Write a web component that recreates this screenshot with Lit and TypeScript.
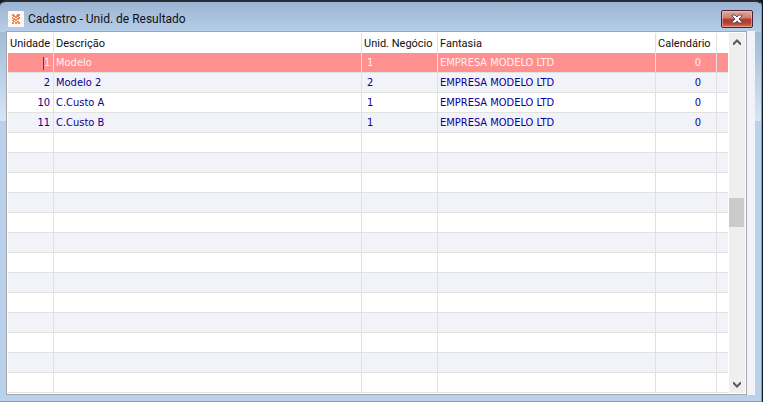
import { LitElement, html, css, nothing } from "lit";
import { customElement, property } from "lit/decorators.js";

interface Unit {
  id: string;
  name: string;
  business: string;
  company: string;
  calendar: string;
}

const UNITS: Unit[] = [
  { id: "1", name: "Modelo", business: "1", company: "EMPRESA MODELO LTD", calendar: "0" },
  { id: "2", name: "Modelo 2", business: "2", company: "EMPRESA MODELO LTD", calendar: "0" },
  { id: "10", name: "C.Custo A", business: "1", company: "EMPRESA MODELO LTD", calendar: "0" },
  { id: "11", name: "C.Custo B", business: "1", company: "EMPRESA MODELO LTD", calendar: "0" },
];

const EMPTY_ROWS = 13;

@customElement("title-bar")
export class TitleBar extends LitElement {
  @property() heading = "";

  static styles = css`
    :host {
      display: flex;
      align-items: center;
      box-sizing: border-box;
      height: 29px;
      padding: 4px 2px 0;
      font: 12px/16px Roboto, "Noto Sans", sans-serif;
      color: #101018;
    }
    .logo {
      width: 16px;
      height: 16px;
      margin-right: 4px;
      flex: none;
    }
    .title {
      flex: 1;
      margin: 0;
      font: inherit;
      white-space: nowrap;
    }
    .close {
      display: flex;
      align-items: center;
      justify-content: center;
      box-sizing: border-box;
      width: 32px;
      height: 18px;
      padding: 0;
      border: 1px solid #4a2430;
      border-radius: 2px;
      background: linear-gradient(#e0aaa2 0%, #cd7a70 45%, #b43a30 50%, #b8402f 75%, #d2705c 100%);
      box-shadow: inset 0 0 0 1px rgba(255, 215, 205, 0.45);
    }
  `;

  render() {
    return html`
      <svg class="logo" viewBox="0 0 16 16" aria-hidden="true">
        <rect width="16" height="16" rx="1" fill="#fdf8f6" />
        <g fill="#f58a50">
          <path d="M4 3h2v1h1v1h1V4h1V3h3v2h-1v1h-2v1H7V6H5V5H4z" />
          <path d="M4 6h1v1h2v1h2V7h1V6h2v2h-1v1H9v1H7V9H6v1H4V9h1V8H4z" />
          <path d="M4 11h1v-1h2v1H6v2H4zM7 11h2v-1h2v1h1v2h-2v-1H9v1H7z" />
        </g>
      </svg>
      <h1 class="title">${this.heading}</h1>
      <button class="close" aria-label="Fechar">
        <svg width="12" height="10" viewBox="0 0 12 10" aria-hidden="true">
          <path d="M1 1h3l2 2 2-2h3v1L8 5l3 3v1H8L6 7 4 9H1V8l3-3-3-3z" fill="#f8f8f8" stroke="#58505c" />
        </svg>
      </button>
    `;
  }
}

@customElement("scroll-rail")
export class ScrollRail extends LitElement {
  static styles = css`
    :host {
      display: flex;
      flex-direction: column;
      width: 16px;
      background: #efefef;
    }
    .arrow {
      display: flex;
      align-items: center;
      justify-content: center;
      height: 17px;
      padding: 0;
      border: 0;
      background: transparent;
    }
    .track {
      flex: 1;
      display: flex;
      flex-direction: column;
    }
    .before {
      flex: 148;
    }
    .thumb {
      width: 15px;
      height: 29px;
      background: #cbcbcb;
    }
    .after {
      flex: 149;
    }
  `;

  render() {
    return html`
      <button class="arrow" aria-label="Acima">
        <svg width="8" height="6" viewBox="0 0 8 6"><path d="M0 5V4l4-4 4 4v2H7L4 3 1 6H0z" fill="#5a5a5a" /></svg>
      </button>
      <div class="track">
        <div class="before"></div>
        <div class="thumb"></div>
        <div class="after"></div>
      </div>
      <button class="arrow" aria-label="Abaixo">
        <svg width="8" height="6" viewBox="0 0 8 6"><path d="M0 1v1l4 4 4-4V0H7L4 3 1 0H0z" fill="#5a5a5a" /></svg>
      </button>
    `;
  }
}

@customElement("unit-table")
export class UnitTable extends LitElement {
  static styles = css`
    :host {
      display: block;
      font: 11px/16px "DejaVu Sans Condensed", "Noto Sans", sans-serif;
    }
    table {
      width: 100%;
      table-layout: fixed;
      border-spacing: 0;
    }
    .c-id { width: 46px; }
    .c-business { width: 76px; }
    .c-company { width: 218px; }
    .c-calendar { width: 61px; }
    .c-end { width: 11px; }
    th, td {
      box-sizing: border-box;
      height: 20px;
      padding: 1px 2px 0;
      border-right: 1px solid #e1e1e1;
      text-align: left;
      font-weight: normal;
      white-space: nowrap;
      overflow: hidden;
    }
    th {
      font: 11px/16px Roboto, "Noto Sans", sans-serif;
      color: #101010;
    }
    th:last-child, td:last-child { border-right: 0; }
    td {
      border-bottom: 1px solid #e1e1e1;
      color: #0a0096;
    }
    tr:nth-child(even) td { background: #f2f3f9; }
    .selected td {
      background: #ff9090;
      color: #fff0f0;
    }
    td.id { text-align: right; padding-right: 3px; }
    td.business { padding-left: 5px; }
    td.calendar { text-align: right; padding-right: 15px; }
    .editor {
      display: flex;
      justify-content: flex-end;
      align-items: center;
    }
    .caret {
      width: 1px;
      height: 13px;
      background: #00686c;
    }
    .field {
      width: 6px;
      height: 16px;
      padding: 0;
      border: 0;
      outline: 0;
      background: transparent;
      font: inherit;
      color: inherit;
      text-align: right;
    }
  `;

  private row(unit: Unit, index: number) {
    const selected = index === 0;
    return html`
      <tr class=${selected ? "selected" : nothing}>
        <td class="id">
          ${selected
            ? html`<div class="editor">
                <span class="caret"></span><input class="field" aria-label="Unidade" .value=${unit.id} />
              </div>`
            : unit.id}
        </td>
        <td>${unit.name}</td>
        <td class="business">${unit.business}</td>
        <td>${unit.company}</td>
        <td class="calendar">${unit.calendar}</td>
        <td></td>
      </tr>
    `;
  }

  render() {
    return html`
      <table>
        <colgroup>
          <col class="c-id" /><col /><col class="c-business" />
          <col class="c-company" /><col class="c-calendar" /><col class="c-end" />
        </colgroup>
        <thead>
          <tr>
            <th scope="col">Unidade</th>
            <th scope="col">Descrição</th>
            <th scope="col">Unid. Negócio</th>
            <th scope="col">Fantasia</th>
            <th scope="col">Calendário</th>
            <th></th>
          </tr>
        </thead>
        <tbody>
          ${UNITS.map((unit, index) => this.row(unit, index))}
          ${Array.from(
            { length: EMPTY_ROWS },
            () => html`<tr><td></td><td></td><td></td><td></td><td></td><td></td></tr>`
          )}
        </tbody>
      </table>
    `;
  }
}

@customElement("app-root")
export class AppRoot extends LitElement {
  static styles = css`
    :host {
      display: block;
      background: #101820;
      padding-right: 1px;
    }
    .window {
      display: flex;
      flex-direction: column;
      box-sizing: border-box;
      min-height: 100vh;
      padding: 0 6px 6px;
      border-top: 2px solid #2c2c34;
      border-right: 1px solid #2fc0dc;
      border-bottom: 1px solid #2fc0dc;
      border-radius: 6px 6px 0 0;
      background: linear-gradient(#9ab3d1 0, #b7cfea 30px, transparent 30px),
        linear-gradient(#a2bad7 30px, #d6e6f6 119px, #b9d1ea 119px);
    }
    .client {
      display: flex;
      flex: 1;
      padding-right: 8px;
      background: #f2f3f9;
    }
    .grid {
      display: flex;
      flex: 1;
      gap: 1px;
      padding: 1px;
      border: 1px solid #a3a5ab;
      background: #fff;
    }
    unit-table { flex: 1; }
  `;

  render() {
    return html`
      <main class="window">
        <title-bar heading="Cadastro - Unid. de Resultado"></title-bar>
        <div class="client">
          <div class="grid">
            <unit-table></unit-table>
            <scroll-rail></scroll-rail>
          </div>
        </div>
      </main>
    `;
  }
}
